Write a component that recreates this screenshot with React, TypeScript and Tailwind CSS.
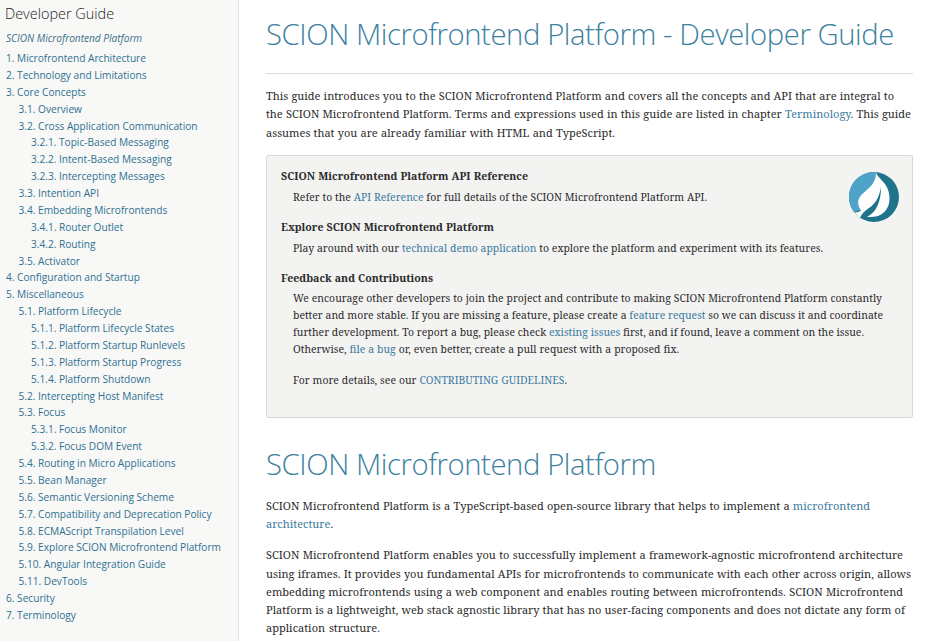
import type { ReactNode } from "react";

const toc: [number, string][] = [
  [0, "1. Microfrontend Architecture"],
  [0, "2. Technology and Limitations"],
  [0, "3. Core Concepts"],
  [1, "3.1. Overview"],
  [1, "3.2. Cross Application Communication"],
  [2, "3.2.1. Topic-Based Messaging"],
  [2, "3.2.2. Intent-Based Messaging"],
  [2, "3.2.3. Intercepting Messages"],
  [1, "3.3. Intention API"],
  [1, "3.4. Embedding Microfrontends"],
  [2, "3.4.1. Router Outlet"],
  [2, "3.4.2. Routing"],
  [1, "3.5. Activator"],
  [0, "4. Configuration and Startup"],
  [0, "5. Miscellaneous"],
  [1, "5.1. Platform Lifecycle"],
  [2, "5.1.1. Platform Lifecycle States"],
  [2, "5.1.2. Platform Startup Runlevels"],
  [2, "5.1.3. Platform Startup Progress"],
  [2, "5.1.4. Platform Shutdown"],
  [1, "5.2. Intercepting Host Manifest"],
  [1, "5.3. Focus"],
  [2, "5.3.1. Focus Monitor"],
  [2, "5.3.2. Focus DOM Event"],
  [1, "5.4. Routing in Micro Applications"],
  [1, "5.5. Bean Manager"],
  [1, "5.6. Semantic Versioning Scheme"],
  [1, "5.7. Compatibility and Deprecation Policy"],
  [1, "5.8. ECMAScript Transpilation Level"],
  [1, "5.9. Explore SCION Microfrontend Platform"],
  [1, "5.10. Angular Integration Guide"],
  [1, "5.11. DevTools"],
  [0, "6. Security"],
  [0, "7. Terminology"],
];

const indents = ["pl-[6px]", "pl-[18.5px]", "pl-[31px]"];

function A({ children }: { children: ReactNode }) {
  return <a className="text-[#3b7a9e]">{children}</a>;
}

// One line of running text, spread to the given width.
function L({ w, children }: { w: string; children: ReactNode }) {
  return <span className={`block whitespace-nowrap [text-align-last:justify] ${w}`}>{children}</span>;
}

function Logo() {
  return (
    <svg viewBox="0 0 50 50" className="h-[50px] w-[50px]">
      <circle cx="25" cy="25" r="25" fill="#1f748c" />
      <path d="M27 0 A25 25 0 0 0 5 40 L12 38 L28 10Z" fill="#4fa3c8" />
      <path
        d="M27 0.5C29 7 40 11 40.5 25C41 37 34 43 27 44.5C24 45.2 20 45 18 44.7C27 41 32 30 32 15C30 26 26 32 20 36C16 39 13 41 11 46Q7.5 43 5.5 40.5Q9 41 12 38.5C7 31 9 25 15 20.500C21 15 27 11 27 0.500Z"
        fill="#fff"
      />
    </svg>
  );
}

export default function App() {
  return (
    <div className="flex h-[641px] w-[930px] overflow-hidden bg-white">
      <nav className="w-[239px] shrink-0 border-r border-[#e3e3e6] bg-[#f8f8f7] font-['Open_Sans',sans-serif]">
        <h2 className="pt-[4px] pl-[5px] text-[14.45px] leading-[20px] font-light text-[#222]">Developer Guide</h2>
        <div className="mt-[7px] mb-[4px] pl-[6px] text-[10.1px] leading-[15px] text-[#3b7089] italic">
          SCION Microfrontend Platform
        </div>
        <ul className="text-[10.15px] leading-[16.88px] text-[#2f7191]">
          {toc.map(([level, label]) => (
            <li key={label} className={indents[level]}>
              {label}
            </li>
          ))}
        </ul>
      </nav>
      <main className="w-[691px] pr-[17px] pl-[27px] font-['Noto_Serif',serif] text-[11px] text-[#2b2b2b]">
        <header className="h-[74px] border-b border-[#dddddf] pt-[14px]">
          <h1 className="font-['Open_Sans',sans-serif] text-[29.25px] leading-[40px] font-light tracking-[-0.42px] whitespace-nowrap text-[#3d819f]">
            SCION Microfrontend Platform - Developer Guide
          </h1>
        </header>
        <p className="mt-[13px] leading-[18.3px]">
          <L w="w-[628px]">This guide introduces you to the SCION Microfrontend Platform and covers all the concepts and API that are integral to</L>
          <L w="w-[645px]">the SCION Microfrontend Platform. Terms and expressions used in this guide are listed in chapter <A>Terminology</A>. This guide</L>
          <L w="w-[349px]">assumes that you are already familiar with HTML and TypeScript.</L>
        </p>
        <section className="mt-[13px] flex h-[263px] justify-between rounded-[2px] border border-[#d9d9d8] bg-[#f3f3f2] pt-[12px] pr-[13px] pl-[14px] text-[10.42px] leading-[17px]">
          <dl className="w-[590px]">
            <dt className="text-[10.62px] font-bold"><L w="w-[247px]">SCION Microfrontend Platform API Reference</L></dt>
            <dd className="mt-[4px] mb-[13px] pl-[12px]">
              <L w="w-[414px]">Refer to the <A>API Reference</A> for full details of the SCION Microfrontend Platform API.</L>
            </dd>
            <dt className="text-[10.62px] font-bold"><L w="w-[213px]">Explore SCION Microfrontend Platform</L></dt>
            <dd className="mt-[4px] mb-[13px] pl-[12px]">
              <L w="w-[530px]">Play around with our <A>technical demo application</A> to explore the platform and experiment with its features.</L>
            </dd>
            <dt className="text-[10.62px] font-bold"><L w="w-[152px]">Feedback and Contributions</L></dt>
            <dd className="mt-[3px] pl-[12px]">
              <L w="w-[589px]">We encourage other developers to join the project and contribute to making SCION Microfrontend Platform constantly</L>
              <L w="w-[590px]">better and more stable. If you are missing a feature, please create a <A>feature request</A> so we can discuss it and coordinate</L>
              <L w="w-[571px]">further development. To report a bug, please check <A>existing issues</A> first, and if found, leave a comment on the issue.</L>
              <L w="w-[386px]">Otherwise, <A>file a bug</A> or, even better, create a pull request with a proposed fix.</L>
              <div className="mt-[14px]">
                <L w="w-[274px]">For more details, see our <A>CONTRIBUTING GUIDELINES</A>.</L>
              </div>
            </dd>
          </dl>
          <div className="-ml-6 pt-[4px]"><Logo /></div>
        </section>
        <h1 className="mt-[26px] font-['Open_Sans',sans-serif] text-[29.25px] leading-[40px] font-light tracking-[-0.42px] whitespace-nowrap text-[#3d819f]">
          SCION Microfrontend Platform
        </h1>
        <p className="mt-[13px] leading-[18.3px]">
          <L w="w-[604px]">SCION Microfrontend Platform is a TypeScript-based open-source library that helps to implement a <A>microfrontend</A></L>
          <L w="w-[68px]"><A>architecture</A>.</L>
        </p>
        <p className="mt-[13px] leading-[18.2px]">
          <L w="w-[637px]">SCION Microfrontend Platform enables you to successfully implement a framework-agnostic microfrontend architecture</L>
          <L w="w-[645px]">using iframes. It provides you fundamental APIs for microfrontends to communicate with each other across origin, allows</L>
          <L w="w-[637px]">embedding microfrontends using a web component and enables routing between microfrontends. SCION Microfrontend</L>
          <L w="w-[639px]">Platform is a lightweight, web stack agnostic library that has no user-facing components and does not dictate any form of</L>
          <L w="w-[114px]">application structure.</L>
        </p>
      </main>
    </div>
  );
}
